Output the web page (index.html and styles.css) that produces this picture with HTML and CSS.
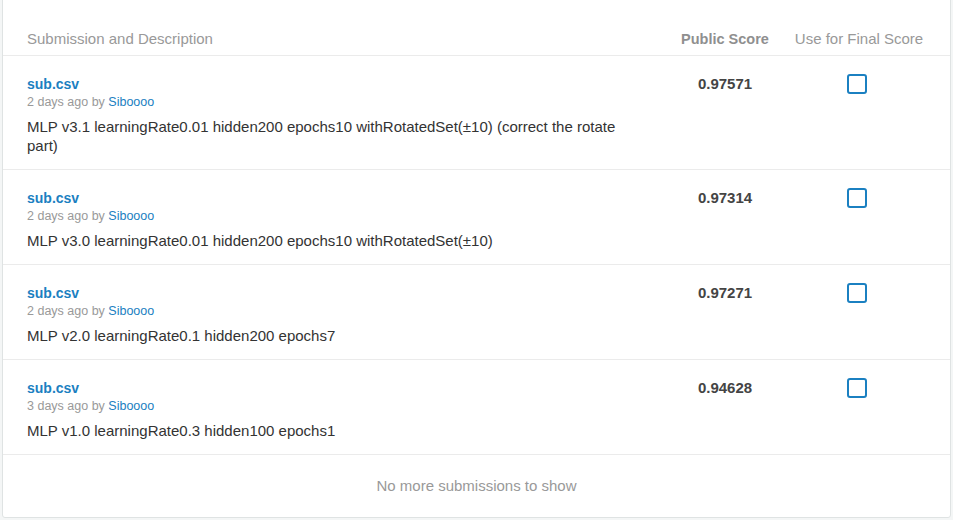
FILE: index.html
```html
<!DOCTYPE html>
<html>
<head>
<meta charset="utf-8">
<link rel="stylesheet" href="styles.css">
</head>
<body>
<div class="card">
  <div class="row head">
    <div class="c-desc">Submission and Description</div>
    <div class="c-score bold">Public Score</div>
    <div class="c-final">Use for Final Score</div>
  </div>

  <div class="row sub">
    <div class="c-desc">
      <a class="file">sub.csv</a>
      <div class="meta">2 days ago by <a class="user">Siboooo</a></div>
      <div class="desc">MLP v3.1 learningRate0.01 hidden200 epochs10 withRotatedSet(±10) (correct the rotate part)</div>
    </div>
    <div class="c-score score">0.97571</div>
    <div class="c-final"><span class="check"></span></div>
  </div>

  <div class="row sub">
    <div class="c-desc">
      <a class="file">sub.csv</a>
      <div class="meta">2 days ago by <a class="user">Siboooo</a></div>
      <div class="desc">MLP v3.0 learningRate0.01 hidden200 epochs10 withRotatedSet(±10)</div>
    </div>
    <div class="c-score score">0.97314</div>
    <div class="c-final"><span class="check"></span></div>
  </div>

  <div class="row sub">
    <div class="c-desc">
      <a class="file">sub.csv</a>
      <div class="meta">2 days ago by <a class="user">Siboooo</a></div>
      <div class="desc">MLP v2.0 learningRate0.1 hidden200 epochs7</div>
    </div>
    <div class="c-score score">0.97271</div>
    <div class="c-final"><span class="check"></span></div>
  </div>

  <div class="row sub">
    <div class="c-desc">
      <a class="file">sub.csv</a>
      <div class="meta">3 days ago by <a class="user">Siboooo</a></div>
      <div class="desc">MLP v1.0 learningRate0.3 hidden100 epochs1</div>
    </div>
    <div class="c-score score">0.94628</div>
    <div class="c-final"><span class="check"></span></div>
  </div>

  <div class="foot">No more submissions to show</div>
</div>
</body>
</html>
```

FILE: styles.css
```css
html, body {
  margin: 0;
  padding: 0;
  background: #f4f6f6;
  font-family: "Liberation Sans", Arial, sans-serif;
}
.card {
  margin: -1px 0 0 2px;
  width: 947px;
  background: #fff;
  border: 1px solid #dfe3e3;
  border-radius: 0 0 3px 3px;
}
.row {
  display: grid;
  grid-template-columns: 1fr 116px 152px;
  padding: 0 15px 0 24px;
  border-bottom: 1px solid #ebebeb;
}
.head {
  padding-top: 29px;
  padding-bottom: 6px;
  font-size: 15px;
  line-height: 20px;
  color: #999;
}
.c-score, .c-final {
  text-align: center;
}
.bold {
  font-weight: bold;
  font-size: 14.5px;
  color: #8f8f8f;
}
.sub {
  padding-top: 19px;
  padding-bottom: 14px;
}
.sub .c-desc {
  padding-right: 34px;
}
.file {
  display: block;
  font-size: 14px;
  line-height: 18px;
  font-weight: bold;
  color: #1b80c1;
}
.meta {
  font-size: 12.5px;
  line-height: 18px;
  color: #999;
}
.user {
  color: #1b80c1;
}
.desc {
  margin-top: 6px;
  font-size: 15px;
  line-height: 19px;
  color: #333;
}
.score {
  font-size: 15px;
  line-height: 18px;
  font-weight: bold;
  color: #444;
}
.sub .c-final {
  display: flex;
  justify-content: center;
  padding-right: 4px;
}
.check {
  display: block;
  width: 16px;
  height: 16px;
  margin-top: -1px;
  border: 2px solid #1b80c1;
  border-radius: 3px;
}
.foot {
  padding: 21px 0 21px;
  text-align: center;
  font-size: 15px;
  line-height: 20px;
  color: #999;
}
```
